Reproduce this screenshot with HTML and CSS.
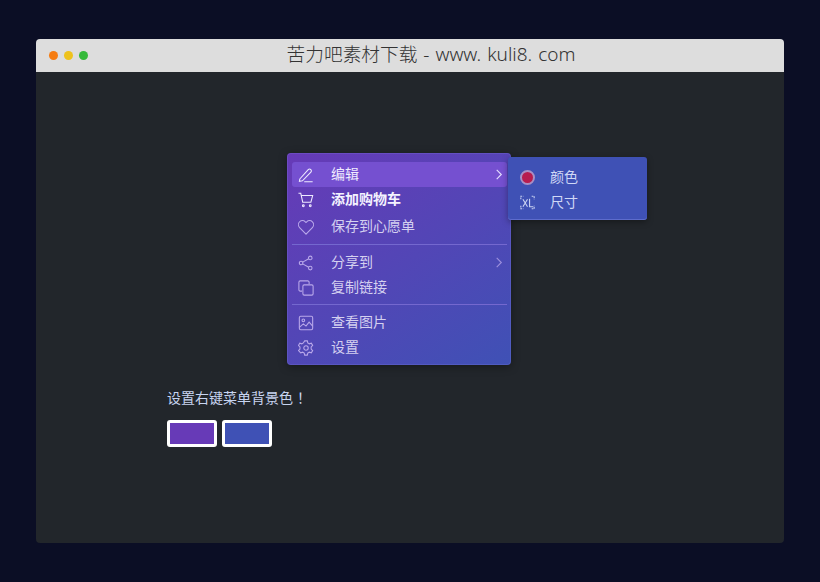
FILE: index.html
```html
<!DOCTYPE html>
<html>
<head>
  <title>苦力吧素材下载</title>
  <link rel="stylesheet" href="styles.css">
</head>
<body>

<div class="window">
  <div class="titlebar">
    <div class="dots">
      <span class="dot orange"></span>
      <span class="dot yellow"></span>
      <span class="dot green"></span>
    </div>
    <div class="title">苦力吧素材下载<span class="url"> - www. kuli8. com</span></div>
  </div>

  <div class="content">
    <p class="hint">设置右键菜单背景色<span class="bang">！</span></p>
    <div class="swatches">
      <span class="swatch purple"></span>
      <span class="swatch blue"></span>
    </div>

    <div class="menu">
      <div class="item active">
        <svg class="icon" viewBox="0 0 18 18"><path d="M2 13.500 11.500 3a2 2 0 0 1 3 2.800L5 15.600l-3.400.6zM7 16.500h9.500"/></svg>
        <span class="label">编辑</span>
        <svg class="arrow" viewBox="0 0 8 12"><path d="M1.500 1 6.500 6l-5 5"/></svg>
      </div>
      <div class="item strong">
        <svg class="icon" viewBox="0 0 18 18"><path d="M.5 1.500h2.600l2.200 10h9.200l2-7.500H3.900"/><circle cx="6" cy="15.500" r="1"/><circle cx="13.800" cy="15.500" r="1"/></svg>
        <span class="label">添加购物车</span>
      </div>
      <div class="item tall">
        <svg class="icon" viewBox="0 0 18 18"><path d="M9 17 1.800 9.600a4.700 4.700 0 0 1 0-6.500 4.500 4.500 0 0 1 6.400 0l.8.8.8-.8a4.500 4.500 0 0 1 6.400 0 4.700 4.700 0 0 1 0 6.500z"/></svg>
        <span class="label">保存到心愿单</span>
      </div>
      <div class="sep"></div>
      <div class="item">
        <svg class="icon" viewBox="0 0 18 18"><circle cx="3.500" cy="9" r="2"/><circle cx="13.800" cy="3.300" r="2"/><circle cx="13.800" cy="14.700" r="2"/><path d="M5.300 8 12 4.300M5.300 10 12 13.700"/></svg>
        <span class="label">分享到</span>
        <svg class="arrow dim" viewBox="0 0 8 12"><path d="M1.500 1 6.500 6l-5 5"/></svg>
      </div>
      <div class="item">
        <svg class="icon" viewBox="0 0 18 18"><path d="M4.500 12.500H2.500a1.500 1.500 0 0 1-1.500-1.500V2.500A1.500 1.500 0 0 1 2.500 1H11a1.500 1.500 0 0 1 1.500 1.500v2"/><rect x="5.500" y="5.500" width="11.500" height="11.500" rx="1.500"/></svg>
        <span class="label">复制链接</span>
      </div>
      <div class="sep second"></div>
      <div class="item">
        <svg class="icon" viewBox="0 0 18 18"><rect x="1.500" y="1.500" width="15" height="15" rx="1.500"/><circle cx="6" cy="6" r="1.500"/><path d="M1.500 14 6 10l3 2.500 3.500-4.500 4 4.500"/></svg>
        <span class="label">查看图片</span>
      </div>
      <div class="item">
        <svg class="icon" viewBox="0 0 18 18"><circle cx="9" cy="9" r="2.500"/><path d="M7.500 1h3l.5 2.300 1.700 1 2.300-.7 1.500 2.600-1.700 1.600v2.400l1.700 1.600-1.500 2.600-2.300-.7-1.700 1-.5 2.300h-3l-.5-2.300-1.700-1-2.300.7L.5 11.800l1.700-1.600V7.800L.5 6.200 2 3.600l2.300.7 1.700-1z"/></svg>
        <span class="label">设置</span>
      </div>
    </div>

    <div class="submenu">
      <div class="subitem">
        <span class="color-dot"></span>
        <span class="label">颜色</span>
      </div>
      <div class="subitem">
        <svg class="size-icon" viewBox="0 0 18 18"><path d="M1 5V1.500h3M14 1.500h3V5M1 13v3.500h3M14 16.500h3V13" stroke-dasharray="2 1"/><path d="M3.500 5 9 14M9 5l-5.500 9M11.500 4.500V14H16"/></svg>
        <span class="label">尺寸</span>
      </div>
    </div>
  </div>
</div>

</body>
</html>
```

FILE: styles.css
```css
body {
  margin: 0;
  padding: 39px 36px;
  background-color: #0b0e25;
  font-family: "Noto Sans CJK SC", "Liberation Sans", sans-serif;
}
.window {
  height: 504px;
  border-radius: 4px;
  overflow: hidden;
  display: flex;
  flex-direction: column;
}
.titlebar {
  height: 33px;
  flex-shrink: 0;
  background-color: #dddddd;
  position: relative;
  display: flex;
  align-items: center;
  justify-content: center;
  padding-left: 42px;
}
.dots {
  position: absolute;
  left: 13px;
  top: 12px;
  display: flex;
  gap: 6px;
}
.dot {
  width: 9px;
  height: 9px;
  border-radius: 50%;
}
.orange { background-color: #f57c12; }
.yellow { background-color: #eec21c; }
.green { background-color: #35b93a; }
.title {
  font-size: 18.7px;
  line-height: 20px;
  padding-bottom: 5px;
  font-weight: 300;
  color: #333333;
  white-space: nowrap;
}
.url {
  font-family: "Noto Sans", sans-serif;
  font-size: 19px;
  word-spacing: 1px;
}
.content {
  flex: 1;
  background-color: #22262b;
  position: relative;
  padding: 315px 131px 0;
}
.hint {
  margin: 0;
  font-size: 14px;
  line-height: 20px;
  color: #c8d4f0;
}
.bang {
  margin-left: 4px;
}
.swatches {
  display: flex;
  gap: 5px;
  margin-top: 13px;
}
.swatch {
  width: 44px;
  height: 21px;
  border: 3px solid #fff;
  border-radius: 3px;
}
.purple { background-color: #673ab7; }
.blue { background-color: #3f51b5; }

/* context menu */
.menu {
  position: absolute;
  left: 251px;
  top: 81px;
  width: 224px;
  height: 212px;
  box-sizing: border-box;
  padding: 9px 4px 5px 5px;
  border-radius: 4px;
  background: linear-gradient(145deg, #673ab7, #3f51b5);
  box-shadow: 0 2px 8px rgba(0,0,0,0.35), inset 0 0 0 1px rgba(140,140,240,0.2);
}
.item {
  height: 25px;
  display: flex;
  align-items: center;
  color: #d4d0f0;
  font-size: 14px;
  border-radius: 3px;
}
.item.tall { height: 27px; padding-top: 2px; box-sizing: border-box; }
.item.active {
  background-color: #7550d0;
  color: #f0ecff;
}
.item.strong {
  color: #f4f2ff;
  font-weight: 700;
}
.icon {
  width: 16px;
  height: 16px;
  margin-left: 6px;
  flex-shrink: 0;
  fill: none;
  stroke: #b9a8ea;
  stroke-width: 1.2;
}
.item.active .icon, .item.strong .icon { stroke: #eeeaff; }
.label {
  margin-left: 17px;
  line-height: 20px;
  padding-bottom: 4px;
}
.arrow {
  width: 8px;
  height: 11px;
  margin-left: auto;
  margin-right: 4px;
  fill: none;
  stroke: #e4e0ff;
  stroke-width: 1.2;
}
.arrow.dim { stroke: #9d90de; }
.sep {
  height: 1px;
  background-color: #7468cf;
  margin: 5px 0;
}
.sep.second { margin-top: 4px; }

/* submenu */
.submenu {
  position: absolute;
  left: 472px;
  top: 85px;
  width: 139px;
  height: 63px;
  box-sizing: border-box;
  padding: 8px 0 0 12px;
  border-radius: 3px;
  background-color: #3f51b5;
  box-shadow: 0 2px 6px rgba(0,0,0,0.35), inset 0 -1px 0 rgba(140,150,240,0.4);
}
.subitem {
  height: 25px;
  display: flex;
  align-items: center;
  color: #d0d8f6;
  font-size: 14px;
}
.subitem .label {
  margin-left: 15px;
}
.color-dot {
  width: 11px;
  height: 11px;
  flex-shrink: 0;
  border: 2px solid #a98fc4;
  border-radius: 50%;
  background-color: #b71c4f;
}
.size-icon {
  width: 15px;
  height: 15px;
  flex-shrink: 0;
  fill: none;
  stroke: #ccd4f2;
  stroke-width: 1.3;
}
```
